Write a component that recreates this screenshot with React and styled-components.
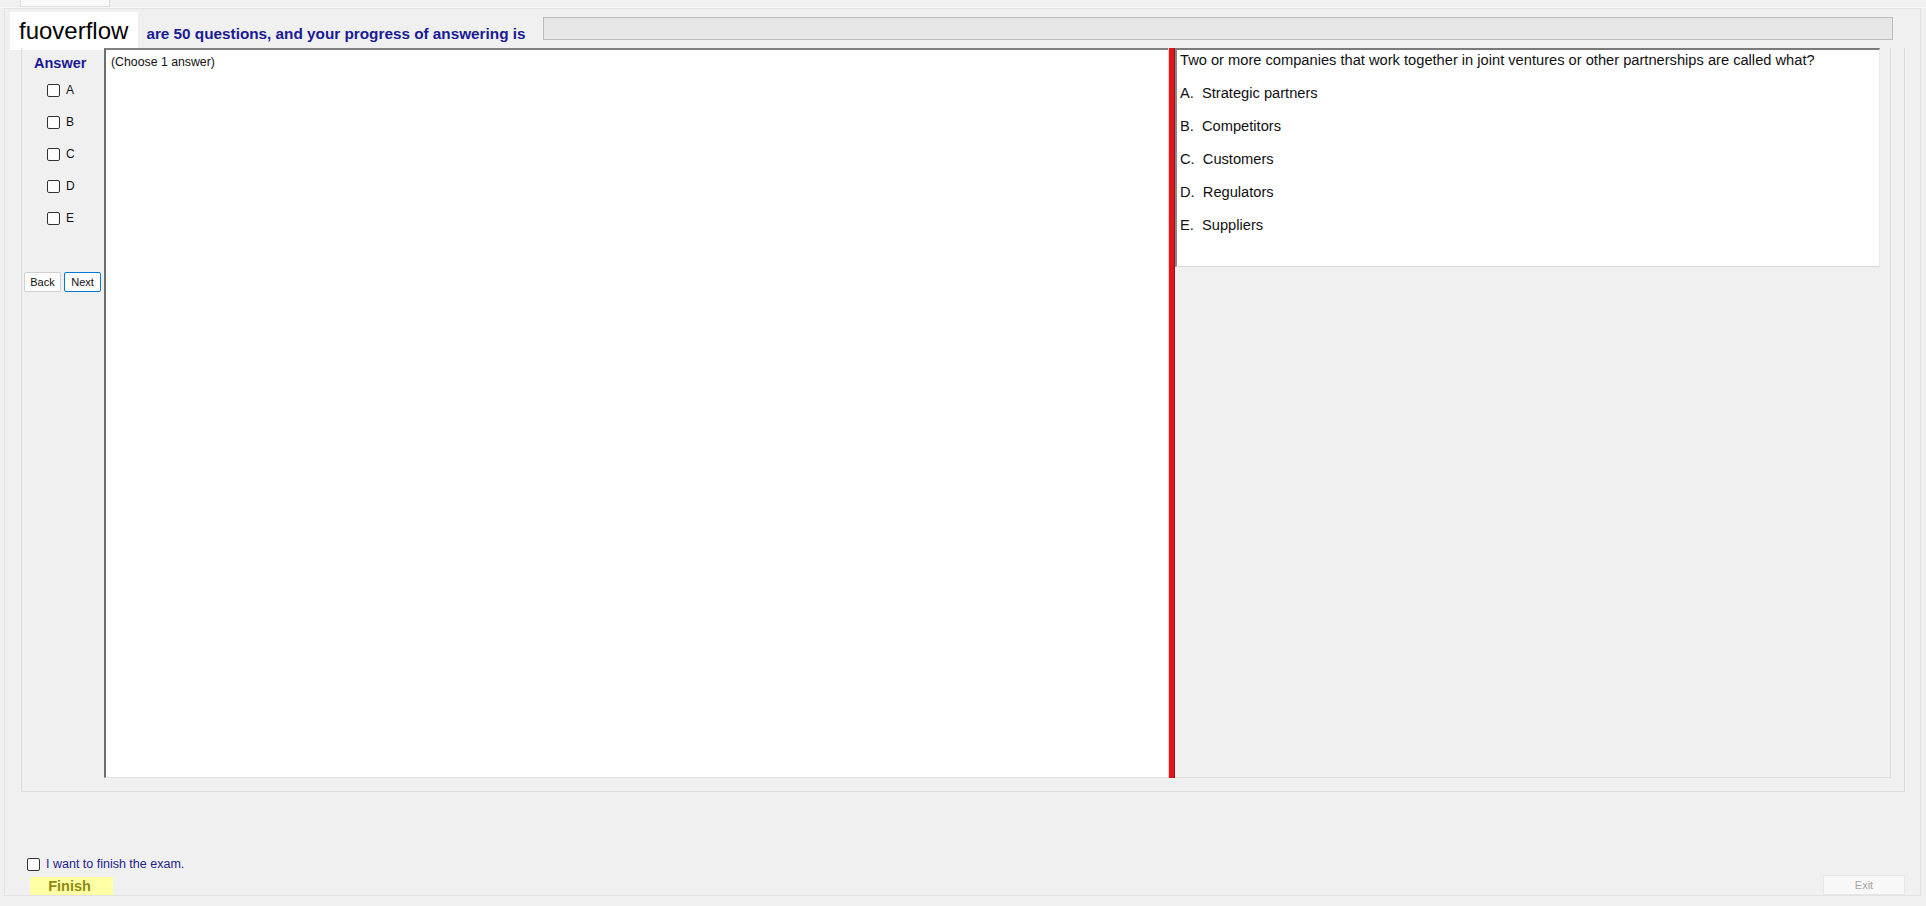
import React, { useState } from 'react'
import styled, { createGlobalStyle } from 'styled-components'

const GlobalStyle = createGlobalStyle`
  * {
    box-sizing: border-box;
  }

  body {
    margin: 0;
    background: #f0f0f0;
    font-family: "Liberation Sans", Arial, sans-serif;
  }
`

const options = [
  { key: 'A', text: 'Strategic partners' },
  { key: 'B', text: 'Competitors' },
  { key: 'C', text: 'Customers' },
  { key: 'D', text: 'Regulators' },
  { key: 'E', text: 'Suppliers' },
]

function App() {
  const [ answers, setAnswers ] = useState({})
  const [ finish, setFinish ] = useState(false)

  const toggle = (key) => setAnswers({ ...answers, [key]: !answers[key] })

  return (
    <Page>
      <GlobalStyle />
      <TabStrip>
        <Tab />
      </TabStrip>

      <Frame>
        <HeaderRow>
          <Brand>fuoverflow</Brand>
          <HeaderText>are 50 questions, and your progress of answering is</HeaderText>
          <Progress />
        </HeaderRow>

        <GroupBox>
          <AnswerColumn>
            <AnswerTitle>Answer</AnswerTitle>
            {options.map((opt) => (
              <AnswerRow key={opt.key}>
                <Check
                  type="checkbox"
                  checked={!!answers[opt.key]}
                  onChange={() => toggle(opt.key)}
                />
                <AnswerLabel>{opt.key}</AnswerLabel>
              </AnswerRow>
            ))}
            <NavButtons>
              <NavButton>Back</NavButton>
              <NavButton focused>Next</NavButton>
            </NavButtons>
          </AnswerColumn>

          <ContentPanel>(Choose 1 answer)</ContentPanel>

          <Splitter />

          <RightArea>
            <QuestionPanel>
              <QuestionText>
                Two or more companies that work together in joint ventures or other partnerships are called what?
              </QuestionText>
              {options.map((opt) => (
                <OptionLine key={opt.key}>{`${opt.key}.  ${opt.text}`}</OptionLine>
              ))}
            </QuestionPanel>
          </RightArea>
        </GroupBox>

        <Footer>
          <FooterLeft>
            <FinishRow>
              <Check type="checkbox" checked={finish} onChange={() => setFinish(!finish)} />
              <FinishLabel>I want to finish the exam.</FinishLabel>
            </FinishRow>
            <FinishButton>Finish</FinishButton>
          </FooterLeft>
          <ExitButton>Exit</ExitButton>
        </Footer>
      </Frame>
    </Page>
  )
}

export default App

const Page = styled.div`
  width: 1926px;
  height: 906px;
  overflow: hidden;
  background: #f0f0f0;
`

const TabStrip = styled.div`
  height: 8px;
  padding-left: 20px;
  border-bottom: 1px solid #f7f7f7;
`

const Tab = styled.div`
  width: 90px;
  height: 7px;
  background: #f9f9f9;
  border: 1px solid #dedede;
  border-top: none;
`

const Frame = styled.div`
  margin: 0 5px 0 4px;
  height: 888px;
  border: 1px solid #e2e2e2;
  display: flex;
  flex-direction: column;
`

const HeaderRow = styled.div`
  height: 39px;
  display: flex;
  align-items: flex-start;
  padding-left: 5px;
`

const Brand = styled.div`
  height: 38px;
  margin-top: 3px;
  padding: 0 10px 0 9px;
  background: #ffffff;
  color: #000;
  font-size: 24px;
  line-height: 38px;
`

const HeaderText = styled.div`
  margin: 16px 0 0 8px;
  color: #1a1a96;
  font-size: 15.3px;
  font-weight: 700;
  white-space: nowrap;
`

const Progress = styled.div`
  flex: 1;
  height: 23px;
  margin: 8px 27px 0 17px;
  background: #e6e6e6;
  border: 1px solid #bcbcbc;
`

const GroupBox = styled.div`
  height: 744px;
  margin: 0 15px 0 16px;
  padding: 0 13px 13px 0;
  border: 1px solid #dcdcdc;
  border-top: none;
  display: flex;
`

const AnswerColumn = styled.div`
  width: 82px;
  padding-top: 7px;
  display: flex;
  flex-direction: column;
`

const AnswerTitle = styled.div`
  padding-left: 12px;
  height: 19px;
  line-height: 16px;
  color: #1a1a96;
  font-size: 14.5px;
  font-weight: 700;
`

const AnswerRow = styled.label`
  height: 32px;
  display: flex;
  align-items: center;
  padding-left: 25px;
  gap: 6px;
  cursor: pointer;
`

const Check = styled.input`
  appearance: none;
  margin: 0;
  width: 13px;
  height: 13px;
  border: 1px solid #333;
  border-radius: 2px;
  background: #fff;
  cursor: pointer;

  &:checked {
    background: #0078d7;
    border-color: #0078d7;
  }
`

const AnswerLabel = styled.span`
  font-size: 12px;
  color: #111;
`

const NavButtons = styled.div`
  display: flex;
  gap: 3px;
  margin-top: 38px;
  padding-left: 2px;
`

const NavButton = styled.button`
  width: 37px;
  height: 20px;
  padding: 0;
  background: #fdfdfd;
  border: 1px solid ${props => props.focused ? '#0078d7' : '#d0d0d0'};
  border-radius: 2px;
  color: #111;
  font-family: "Liberation Sans", Arial, sans-serif;
  font-size: 11px;
`

const ContentPanel = styled.div`
  width: 1064px;
  padding: 4px 5px;
  background: #ffffff;
  border-left: 2px solid #6e6e6e;
  border-top: 2px solid #808080;
  border-bottom: 1px solid #e4e4e4;
  color: #111;
  font-size: 12.3px;
  line-height: 16px;
`

const Splitter = styled.div`
  width: 7px;
  background: #e2161a;
  border-left: 1px solid #f6d0d0;
  border-right: 1px solid #8a1818;
`

const RightArea = styled.div`
  flex: 1;
  background: #f0f0f0;
  border-right: 1px solid #dcdcdc;
  border-bottom: 1px solid #e0e0e0;
`

const QuestionPanel = styled.div`
  width: 705px;
  height: 219px;
  padding: 2px 3px;
  background: #ffffff;
  border-left: 2px solid #8a8a8a;
  border-top: 2px solid #7a7a7a;
  border-bottom: 1px solid #d8d8d8;
  border-right: 1px solid #e8e8e8;
  color: #111;
  font-size: 14.67px;
  line-height: 17px;
`

const QuestionText = styled.div`
  white-space: nowrap;
`

const OptionLine = styled.div`
  margin-top: 16px;
  white-space: pre;
`

const Footer = styled.div`
  flex: 1;
  display: flex;
  justify-content: space-between;
  align-items: flex-end;
  padding: 0 15px 0 22px;
`

const FooterLeft = styled.div`
  display: flex;
  flex-direction: column;
`

const FinishRow = styled.label`
  display: flex;
  align-items: center;
  gap: 6px;
  height: 14px;
  cursor: pointer;
`

const FinishLabel = styled.span`
  color: #23238c;
  font-size: 12.5px;
`

const FinishButton = styled.button`
  width: 83px;
  height: 18px;
  margin: 6px 0 0 3px;
  padding: 0 4px 0 0;
  background: #ffffa6;
  border: none;
  color: #8c8c12;
  font-family: "Liberation Sans", Arial, sans-serif;
  font-size: 14.5px;
  font-weight: 700;
  line-height: 18px;
`

const ExitButton = styled.button`
  width: 82px;
  height: 20px;
  padding: 0;
  background: #f8f8f8;
  border: 1px solid #e6e6e6;
  color: #a6a6a6;
  font-family: "Liberation Sans", Arial, sans-serif;
  font-size: 11px;
`
